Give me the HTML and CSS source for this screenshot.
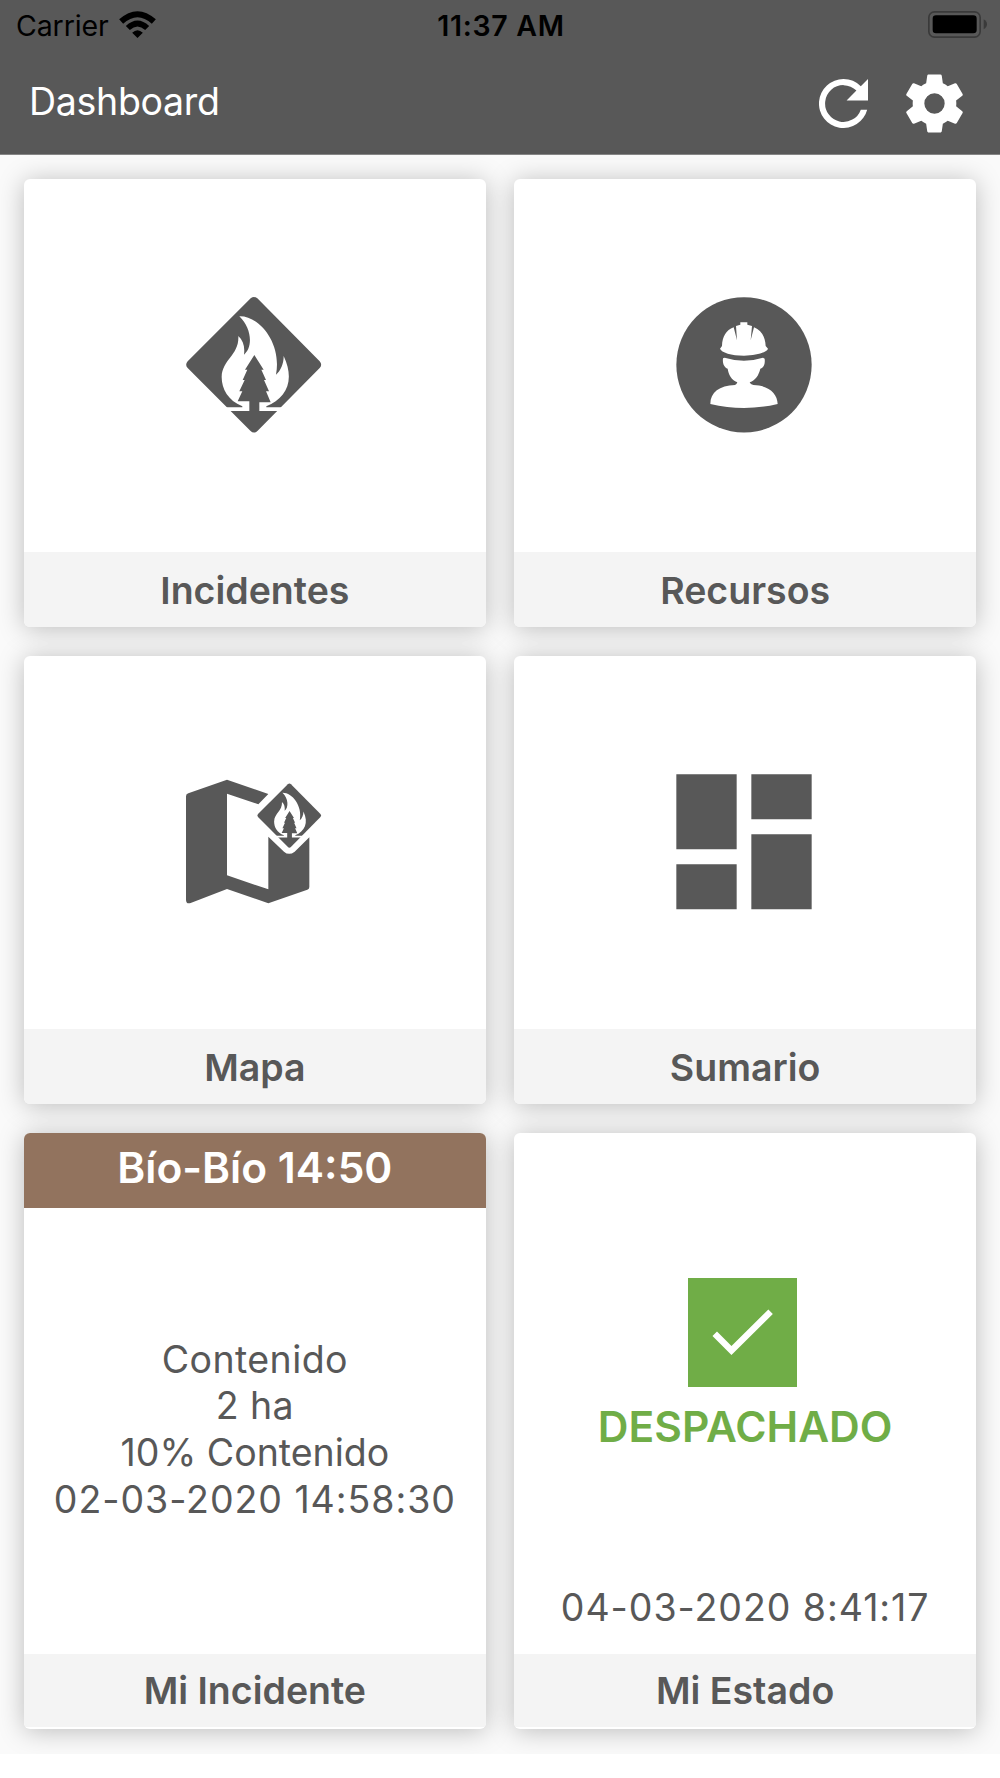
FILE: index.html
```html
<!DOCTYPE html>
<html lang="es">
<head>
  <meta charset="UTF-8">
  <meta name="viewport" content="width=device-width, initial-scale=1.0">
  <title>Dashboard</title>
  <link rel="stylesheet" href="styles.css">
</head>

<body>
  <header class="app-header">
    <div class="status-bar">
      <div class="status-left">
        <span class="carrier">Carrier</span>
        <svg class="wifi" viewBox="0 0 110 81">
          <path d="M0 25Q55-24 110 25L98 38Q55-1 12 38ZM20 45Q55 12 90 45L78 57Q55 36 32 57ZM39 65Q55 50 71 65L55 81Z"/>
        </svg>
      </div>
      <span class="time">11:37 AM</span>
      <div class="status-right">
        <svg class="battery" viewBox="0 0 177 81">
          <rect class="battery-shell" x="2.5" y="2.5" width="154" height="76" rx="17"/>
          <rect x="14" y="13" width="132" height="54" rx="10"/>
          <path class="battery-tip" d="M167 25Q177 31 177 40Q177 49 167 55Z"/>
        </svg>
      </div>
    </div>
    <div class="toolbar">
      <h1>Dashboard</h1>
      <svg class="refresh" viewBox="4 4 16 16">
        <path d="M17.65 6.35A7.958 7.958 0 0 0 12 4a8 8 0 1 0 7.73 10h-2.08A6 6 0 1 1 12 6c1.66 0 3.14.69 4.22 1.78L13 11h7V4l-2.35 2.35z"/>
      </svg>
      <svg class="settings" viewBox="2.2 2 19.6 20">
        <path d="M12 15.5A3.5 3.5 0 0 1 8.5 12 3.5 3.5 0 0 1 12 8.500a3.500 3.500 0 0 1 3.500 3.500 3.500 3.500 0 0 1-3.500 3.500m7.430-2.530c.04-.32.07-.64.07-.97s-.03-.66-.07-1l2.110-1.630c.19-.15.24-.42.12-.64l-2-3.460c-.12-.22-.39-.31-.61-.22l-2.490 1c-.52-.39-1.060-.73-1.690-.98l-.37-2.650A.506.506 0 0 0 14 2h-4c-.25 0-.46.18-.5.420l-.37 2.650c-.63.25-1.170.59-1.690.98l-2.490-1c-.22-.09-.49 0-.61.220l-2 3.460c-.13.220-.07.490.12.640L4.570 11c-.04.340-.07.670-.07 1s.03.650.07.970l-2.110 1.660c-.19.150-.25.420-.12.640l2 3.460c.12.220.39.300.61.220l2.490-1.010c.52.400 1.060.740 1.690.990l.37 2.650c.04.240.25.420.5.420h4c.25 0 .46-.18.5-.42l.37-2.650c.63-.26 1.170-.59 1.690-.99l2.490 1.010c.22.080.49 0 .61-.22l2-3.460c.12-.22.07-.49-.12-.64z"/>
      </svg>
    </div>
  </header>

  <main class="dashboard">
    <section class="card">
      <div class="card-body">
        <svg class="card-icon" viewBox="0 0 510 510">
          <g id="fire-sign">
            <path d="M242 55Q252 47 262 55L449 244Q458 254 449 264L263 452Q252 463 241 452L53 264Q44 254 53 244Z"/>
            <path class="cut" d="M208 109C268 107 336 190 318 284C332 272 341 252 341 228C376 302 349 354 289 379V382H338L326 393H268V367H302L288 334H297L282 300H288L274 269H281L253 225L225 269H232L218 300H224L208 334H217L203 364H238V393H178L166 382H217V379C174 361 155 327 155 291C157 238 208 226 205 168C220 182 225 200 222 224C249 202 246 145 208 109Z"/>
          </g>
        </svg>
      </div>
      <div class="card-label">Incidentes</div>
    </section>

    <section class="card">
      <div class="card-body">
        <svg class="card-icon" viewBox="0 0 510 510">
          <circle cx="252" cy="254.500" r="203"/>
          <path class="cut" d="M180 206L186 198C187 170 198 151 221 142L231 181L228 138L241 134V127H262V134L276 138L272 181L282 142C304 151 316 171 317 198L324 206C320 217 289 227 252 227C214 227 184 217 180 206Z"/>
          <path class="cut" d="M189 235L194 233Q252 251 309 233L314 236C316 252 311 263 301 266C296 286 287 300 269 307Q271 314 280 315C326 316 352 340 353 372Q252 396 151 372C151 337 178 317 225 315Q230 313 232 307C213 299 206 284 203 266C192 263 187 249 189 235Z"/>
        </svg>
      </div>
      <div class="card-label">Recursos</div>
    </section>

    <section class="card">
      <div class="card-body">
        <svg class="card-icon" viewBox="0 -9 510 510">
          <path d="M55 100L171 59L295 102L265 133L171 101V346L295 388V230L342 275Q357 288 374 275L418 232V381Q418 387 412 389L295 430L171 387L62 429Q48 433 48 419V109Q48 102 55 100Z"/>
          <use href="#fire-sign" transform="translate(239 46.500) scale(.473)"/>
        </svg>
      </div>
      <div class="card-label">Mapa</div>
    </section>

    <section class="card">
      <div class="card-body">
        <svg class="card-icon" viewBox="0 -9 510 510">
          <path d="M49 43H230V268H49ZM274 43H455V178H274ZM49 313H230V448H49ZM274 223H455V448H274Z"/>
        </svg>
      </div>
      <div class="card-label">Sumario</div>
    </section>

    <section class="card card-tall">
      <div class="card-title">Bío-Bío 14:50</div>
      <div class="card-body incident">
        <p>Contenido</p>
        <p>2 ha</p>
        <p class="percent">10% Contenido</p>
        <p class="date">02-03-2020 14:58:30</p>
      </div>
      <div class="card-label">Mi Incidente</div>
    </section>

    <section class="card card-tall">
      <div class="card-body state">
        <svg class="state-icon" viewBox="0 0 326 326">
          <rect width="326" height="326"/>
          <path d="M80 167L130 217L247 101"/>
        </svg>
        <p class="state-name">DESPACHADO</p>
        <p class="date">04-03-2020 8:41:17</p>
      </div>
      <div class="card-label">Mi Estado</div>
    </section>
  </main>
</body>
</html>
```
FILE: styles.css
```css
* {
  box-sizing: border-box;
}

body {
  font-family: Inter, "Liberation Sans", sans-serif;
  margin: 0;
  background-color: #fff;
  color: #585858;
}

h1, p {
  margin: 0;
  font-weight: 400;
}

svg {
  display: block;
  flex: none;
}

.app-header {
  height: 155px;
  background-color: #585858;
  border-bottom: 1px solid #858585;
}

.status-bar {
  display: grid;
  grid-template-columns: 1fr auto 1fr;
  align-items: center;
  height: 50px;
  padding: 1px 14px 0 16px;
  color: #000;
  font-size: 28.5px;
  line-height: 50px;
}

.status-left {
  display: flex;
  align-items: center;
  gap: 10px;
}

.carrier {
  letter-spacing: -0.1px;
}

.wifi {
  width: 37px;
  height: 27px;
  margin-top: -4px;
}

.time {
  font-weight: 600;
  letter-spacing: 0.7px;
}

.status-right {
  display: flex;
  justify-content: flex-end;
}

.battery {
  width: 59px;
  height: 27px;
  margin-top: -3px;
  margin-right: -1px;
}

.battery-shell {
  fill: none;
  stroke: #3a3a3a;
  stroke-width: 5;
}

.battery-tip {
  fill: #3a3a3a;
}

.toolbar {
  display: flex;
  align-items: center;
  height: 106px;
  padding: 0 37px 0 29px;
  color: #fff;
}

.toolbar h1 {
  flex: 1;
  margin-top: -3px;
  font-size: 37.5px;
  letter-spacing: -0.3px;
}

.refresh {
  width: 49px;
  height: 49px;
  margin-right: 38px;
  fill: #fff;
}

.settings {
  width: 57px;
  height: 59px;
  fill: #fff;
}

.dashboard {
  display: grid;
  grid-template-columns: 1fr 1fr;
  grid-template-rows: 448px 448px 596px;
  gap: 29px 28.6px;
  height: 1599px;
  padding: 24px;
  background-color: #fafafa;
  overflow: hidden;
}

.card {
  display: flex;
  flex-direction: column;
  background-color: #fff;
  border-radius: 6px;
  box-shadow: 0 2px 26px rgba(0, 0, 0, 0.25);
  overflow: hidden;
}

.card-body {
  flex: 1;
  display: flex;
  flex-direction: column;
  align-items: center;
  justify-content: center;
}

.card-icon {
  width: 170px;
  height: 170px;
  margin-top: -2px;
  fill: #585858;
}

.cut {
  fill: #fff;
}

.card-label {
  height: 75px;
  background-color: #f4f4f4;
  font-size: 37.5px;
  font-weight: 600;
  line-height: 77px;
  text-align: center;
}

.card-tall {
  padding-bottom: 2px;
}

.card-tall .card-label {
  height: 73px;
  line-height: 74px;
}

.card-title {
  height: 75px;
  background-color: #92735e;
  color: #fff;
  font-size: 42.5px;
  font-weight: 600;
  line-height: 70px;
  text-align: center;
}

.incident {
  padding-bottom: 2px;
  font-size: 37.5px;
  line-height: 46.7px;
  letter-spacing: 0.4px;
}

.percent {
  letter-spacing: 0;
}

.date {
  font-size: 37.5px;
  line-height: 46.7px;
  letter-spacing: 0.95px;
}

.state {
  justify-content: flex-start;
  padding-top: 145px;
}

.state-icon {
  width: 109px;
  height: 109px;
  margin-right: 5px;
  fill: #70ad47;
}

.state-icon path {
  fill: none;
  stroke: #fff;
  stroke-width: 19;
}

.state-name {
  margin-top: 14px;
  color: #70ad47;
  font-size: 42.5px;
  font-weight: 600;
  line-height: 52px;
}

.state .date {
  margin-top: 132px;
}
```
